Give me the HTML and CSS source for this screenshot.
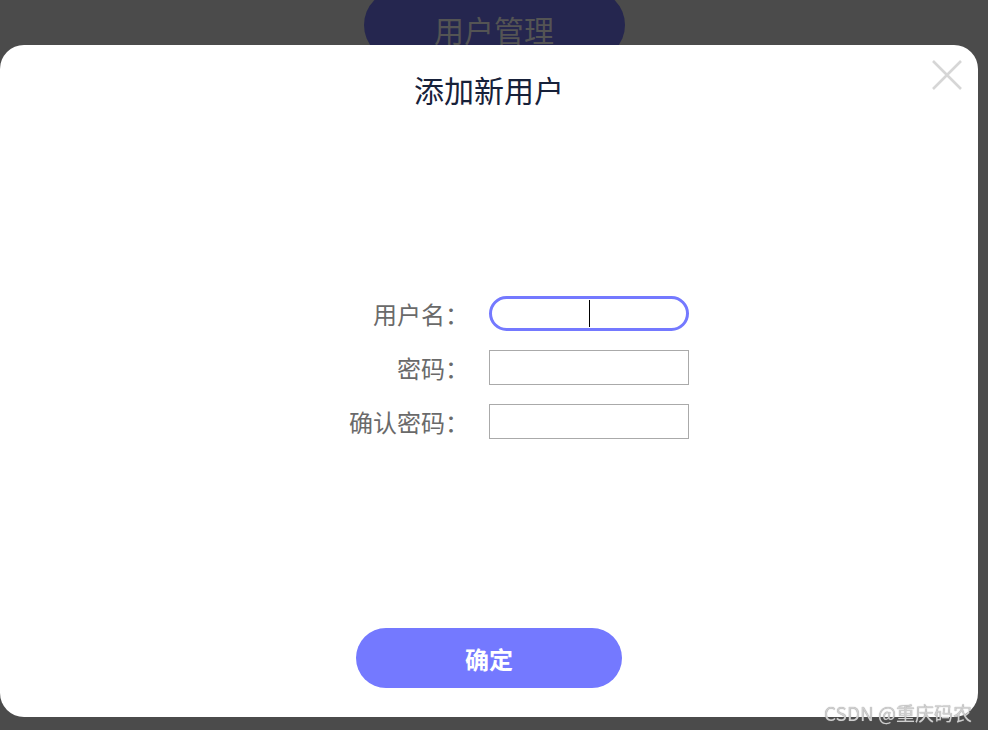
FILE: index.html
```html
<!DOCTYPE html>
<html lang="zh-CN">
<head>
    <meta charset="UTF-8">
    <meta name="viewport" content="width=device-width, initial-scale=1">
    <title>用户管理</title>
    <link rel="stylesheet" href="styles.css">
</head>
<body>
    <div class="page">
        <button class="manage-btn">用户管理</button>
    </div>

    <div class="mask">
        <div class="dialog">
            <h3 class="dialog-title">添加新用户</h3>
            <span class="close-btn">
                <svg width="30" height="30" viewBox="0 0 30 30">
                    <path d="M1 1 L29 29 M29 1 L1 29" stroke="#d6d6d6" stroke-width="2.6" fill="none"/>
                </svg>
            </span>
            <form class="user-form">
                <label>用户名：</label>
                <span class="input-wrap">
                    <input type="text" class="field focused">
                    <i class="caret"></i>
                </span>
                <label>密码：</label>
                <input type="password" class="field">
                <label>确认密码：</label>
                <input type="password" class="field">
            </form>
            <button class="confirm-btn">确定</button>
        </div>
    </div>

    <div class="watermark">CSDN @重庆码农</div>
</body>
</html>
```

FILE: styles.css
```css
body {
    margin: 0;
    height: 730px;
    overflow: hidden;
    background-color: #4b4b4b;
    font-family: "Noto Sans CJK SC", "Noto Sans", sans-serif;
}
.page {
    display: flex;
    justify-content: center;
}
.manage-btn {
    margin-top: -10px;
    width: 261px;
    height: 70px;
    border: none;
    border-radius: 35px;
    background-color: #25264f;
    color: #545454;
    font-family: inherit;
    font-size: 30px;
    padding: 8px 0 0 0;
}
.mask {
    position: fixed;
    top: 0;
    left: 0;
    right: 0;
    bottom: 0;
    padding: 45px 10px 13px 0;
    display: flex;
}
.dialog {
    position: relative;
    flex: 1;
    background-color: #fff;
    border-radius: 24px;
    display: flex;
    flex-direction: column;
    align-items: center;
}
.dialog-title {
    margin: 23px 0 0 0;
    font-size: 30px;
    font-weight: normal;
    line-height: 42px;
    color: #17213a;
}
.close-btn {
    position: absolute;
    top: 15px;
    right: 16px;
    width: 30px;
    height: 30px;
    cursor: pointer;
}
.close-btn svg {
    display: block;
}
.user-form {
    margin-top: 186px;
    display: grid;
    grid-template-columns: 180px 200px;
    column-gap: 20px;
    row-gap: 19px;
    align-items: center;
}
.user-form label {
    text-align: right;
    font-size: 24px;
    line-height: 35px;
    color: #6a6a6a;
}
.field {
    box-sizing: border-box;
    width: 200px;
    height: 35px;
    margin: 0;
    border: 1px solid #aaa;
    outline: none;
    font-size: 16px;
}
.input-wrap {
    position: relative;
    display: block;
}
.field.focused {
    border: 3px solid #7479ff;
    border-radius: 18px;
}
.caret {
    position: absolute;
    left: 100px;
    top: 4px;
    width: 1px;
    height: 27px;
    background-color: #000;
}
.confirm-btn {
    margin: auto 0 29px 0;
    width: 266px;
    height: 60px;
    border: none;
    border-radius: 30px;
    background-color: #7479ff;
    color: #fff;
    font-family: inherit;
    font-size: 24px;
    font-weight: bold;
    cursor: pointer;
}
.watermark {
    position: fixed;
    right: 16px;
    bottom: 4px;
    font-size: 19px;
    color: #cfcfcf;
    text-shadow: 0 0 1px #888;
}
```
